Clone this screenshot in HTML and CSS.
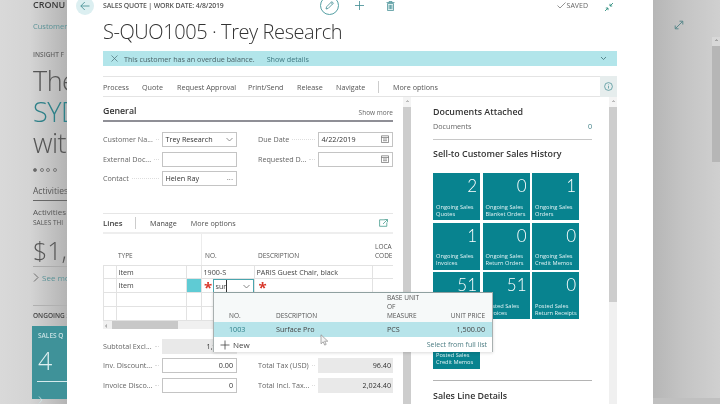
FILE: index.html
```html
<!DOCTYPE html>
<html lang="en">
<head>
<meta charset="utf-8">
<title>Sales Quote</title>
<link rel="stylesheet" href="styles.css">
</head>
<body>
<div class="screen">
  <aside class="backdrop">
    <div class="bg-company">CRONU</div>
    <div class="bg-nav">Customer</div>
    <div class="bg-insight">INSIGHT F</div>
    <div class="bg-hero bg-first">The</div>
    <div class="bg-hero bg-teal">SYD</div>
    <div class="bg-hero">with</div>
    <div class="bg-dots"><i class="on"></i><i></i><i></i><i></i></div>
    <div class="bg-activities">Activities</div>
    <div class="bg-small">Activities</div>
    <div class="bg-sales">SALES THI</div>
    <div class="bg-money">$1,9</div>
    <div class="bg-see"><svg width="6" height="9" viewBox="0 0 6 9"><path d="M1 .5 5 4.5 1 8.500" fill="none" stroke="#555" stroke-width=".8"/></svg>See mo</div>
    <div class="bg-ongoing">ONGOING S</div>
    <div class="bg-tile">
      <div class="bg-tile-title">SALES Q</div>
      <div class="bg-tile-num">4</div>
      <div class="bg-tile-foot"><svg width="5" height="8" viewBox="0 0 5 8"><path d="M1 .5 4 4 1 7.500" fill="none" stroke="#cfe6e8" stroke-width=".8"/></svg></div>
    </div>
  </aside>

  <aside class="backdrop-right">
    <svg class="expand" width="10" height="10" viewBox="0 0 10 10"><path d="M1.500 8.500 8.500 1.500M5.500 1.200H8.800V4.500M1.200 5.500V8.800H4.500" fill="none" stroke="#4f8286" stroke-width=".9"/></svg>
    <div class="bg-scroll"><span class="bg-scroll-arrow">&#8963;</span><div class="bg-scroll-thumb"></div></div>
  </aside>

  <main class="modal">
    <header class="topbar">
      <button class="back"><svg width="10" height="10" viewBox="0 0 10 10"><path d="M9.500 5H.800M4.800 1 .800 5l4 4" fill="none" stroke="#3d8a90" stroke-width=".8"/></svg></button>
      <div class="crumb">SALES QUOTE | WORK DATE: 4/8/2019</div>
      <div class="top-actions">
        <span class="edit"><svg width="11" height="11" viewBox="0 0 11 11"><path d="M2 9 2.600 6.800 7.800 1.600 9.400 3.200 4.200 8.400ZM6.900 2.500 8.500 4.100" fill="none" stroke="#3d8a90" stroke-width=".8"/></svg></span>
        <svg class="plus" width="11" height="11" viewBox="0 0 11 11"><path d="M5.500 1v9M1 5.500h9" stroke="#3d8a90" stroke-width=".8"/></svg>
        <svg class="trash" width="9" height="10" viewBox="0 0 9 10"><path d="M1.500 2.500h6V9.500h-6ZM.5 1.500h8M3 1.500V.5h3v1M3.200 4v4M4.500 4v4M5.800 4v4" fill="#d9eded" stroke="#3d8a90" stroke-width=".7"/></svg>
      </div>
      <div class="saved"><svg width="9" height="7" viewBox="0 0 9 7"><path d="M.5 3.500 3 6 8.500.5" fill="none" stroke="#666" stroke-width=".7"/></svg>SAVED</div>
      <svg class="compress" width="10" height="10" viewBox="0 0 10 10"><path d="M9 1 6 4M6 1.800V4H8.200M1 9l3-3M1.800 6H4V8.200" fill="none" stroke="#2f8f7f" stroke-width=".9"/></svg>
    </header>

    <h1 class="title">S-QUO1005 · Trey Research</h1>

    <div class="banner">
      <svg width="7" height="7" viewBox="0 0 7 7"><path d="M.5.500l6 6M6.500.500l-6 6" stroke="#4a6f75" stroke-width=".7"/></svg>
      <span class="banner-msg">This customer has an overdue balance.</span>
      <span class="banner-link">Show details</span>
      <svg class="banner-chev" width="7" height="5" viewBox="0 0 7 5"><path d="M1 1l2.500 2.500L6 1" fill="none" stroke="#3d6f75" stroke-width=".8"/></svg>
    </div>

    <nav class="actions">
      <span class="act w-process">Process</span>
      <span class="act w-quote">Quote</span>
      <span class="act w-approval">Request Approval</span>
      <span class="act w-print">Print/Send</span>
      <span class="act w-release">Release</span>
      <span class="act w-navigate">Navigate</span>
      <span class="act-divider"></span>
      <span class="act act-more">More options</span>
      <span class="info"><svg width="9" height="9" viewBox="0 0 9 9"><circle cx="4.500" cy="4.500" r="3.900" fill="none" stroke="#3d8a90" stroke-width=".7"/><path d="M4.500 4v2.500M4.500 2.500v.8" stroke="#3d8a90" stroke-width=".7"/></svg></span>
    </nav>

    <div class="panes">
      <section class="pane-left">
        <div class="pane-left-content">
          <div class="general-head"><h2>General</h2><span>Show more</span></div>

          <div class="form-grid general-grid">
            <div class="field"><label>Customer Na...</label><i class="leader"></i><div class="input"><span>Trey Research</span><svg width="7" height="5" viewBox="0 0 7 5"><path d="M.5 1 3.500 4 6.500 1" fill="none" stroke="#666" stroke-width=".7"/></svg></div></div>
            <div class="field"><label>Due Date</label><i class="leader"></i><div class="input"><span>4/22/2019</span><svg width="8" height="8" viewBox="0 0 8 8"><path d="M.5.800h7v6.700h-7ZM.5 2.500h7M2 4h4M2 5.700h4" fill="none" stroke="#555" stroke-width=".6"/></svg></div></div>
            <div class="field"><label>External Doc...</label><i class="leader"></i><div class="input"></div></div>
            <div class="field"><label>Requested D...</label><i class="leader"></i><div class="input"><span></span><svg width="8" height="8" viewBox="0 0 8 8"><path d="M.5.800h7v6.700h-7ZM.5 2.500h7M2 4h4M2 5.700h4" fill="none" stroke="#555" stroke-width=".6"/></svg></div></div>
            <div class="field"><label>Contact</label><i class="leader"></i><div class="input"><span>Helen Ray</span><b class="dots">···</b></div></div>
          </div>

          <div class="lines-bar">
            <strong>Lines</strong><i class="lines-div"></i><span class="lines-manage">Manage</span><span class="lines-more">More options</span>
            <svg class="lines-icon" width="9" height="8" viewBox="0 0 9 8"><path d="M6 .8H.6v6.500h7.200V3.500M4 5 8.300.7M5.800.5h2.700v2.700" fill="none" stroke="#2f8f7f" stroke-width=".7"/></svg>
          </div>

          <div class="lines-table">
            <div class="t-head">
              <span></span><span>TYPE</span><span></span><span class="t-no">NO.</span><span>DESCRIPTION</span><span>LOCA<br>CODE</span>
            </div>
            <div class="t-row"><span></span><span>Item</span><span></span><span>1900-S</span><span>PARIS Guest Chair, black</span><span></span></div>
            <div class="t-row">
              <span></span><span>Item</span><span class="t-current"></span>
              <span class="t-edit"><b class="req">*</b><div class="t-input"><span>sur</span><svg width="7" height="5" viewBox="0 0 7 5"><path d="M.5 1 3.500 4 6.500 1" fill="none" stroke="#555" stroke-width=".7"/></svg></div></span>
              <span><b class="req">*</b></span><span></span>
            </div>
            <div class="t-row"><span></span><span></span><span></span><span></span><span></span><span></span></div>
            <div class="t-row"><span></span><span></span><span></span><span></span><span></span><span></span></div>
            <div class="h-scroll"><span>‹</span><div class="h-thumb"></div></div>
          </div>

          <div class="form-grid totals-grid">
            <div class="field"><label>Subtotal Excl...</label><i class="leader"></i><div class="input readonly"><span class="num">1,928.00</span></div></div>
            <div class="field"></div>
            <div class="field"><label>Inv. Discount...</label><i class="leader"></i><div class="input"><span class="num">0.00</span></div></div>
            <div class="field"><label>Total Tax (USD)</label><i class="leader"></i><div class="input readonly"><span class="num">96.40</span></div></div>
            <div class="field"><label>Invoice Disco...</label><i class="leader"></i><div class="input"><span class="num">0</span></div></div>
            <div class="field"><label>Total Incl. Tax...</label><i class="leader"></i><div class="input readonly"><span class="num">2,024.40</span></div></div>
          </div>

          <div class="dropdown">
            <div class="dd-head">
              <span>NO.</span><span>DESCRIPTION</span><span class="dd-unit">BASE UNIT<br>OF<br>MEASURE</span><span class="dd-price">UNIT PRICE</span>
            </div>
            <div class="dd-row"><span class="dd-code">1003</span><span>Surface Pro</span><span>PCS</span><span class="dd-price">1,500.00</span></div>
            <div class="dd-foot">
              <span class="dd-new"><svg width="10" height="10" viewBox="0 0 10 10"><path d="M5 .5v9M.5 5h9" stroke="#444" stroke-width=".8"/></svg>New</span>
              <span class="dd-full">Select from full list</span>
            </div>
            <svg class="cursor" width="9" height="12" viewBox="0 0 9 12"><path d="M1 .8v9l2.200-2 1.500 3.300 1.500-.7L4.700 7.200H7.800Z" fill="#f4f4f4" stroke="#8a8a8a" stroke-width=".7"/></svg>
          </div>
        </div>
        <div class="scrollbar"><span class="scroll-arrow">&#8963;</span><div class="scroll-thumb"></div></div>
      </section>

      <section class="pane-right">
        <div class="pane-right-content">
          <h3 class="docs-title">Documents Attached</h3>
          <div class="docs-row"><span>Documents</span><span class="docs-num">0</span></div>
          <h3 class="history-title">Sell-to Customer Sales History</h3>
          <div class="tiles">
            <div class="tile"><b>2</b><span>Ongoing Sales<br>Quotes</span></div>
            <div class="tile"><b>0</b><span>Ongoing Sales<br>Blanket Orders</span></div>
            <div class="tile"><b>1</b><span>Ongoing Sales<br>Orders</span></div>
            <div class="tile"><b>1</b><span>Ongoing Sales<br>Invoices</span></div>
            <div class="tile"><b>0</b><span>Ongoing Sales<br>Return Orders</span></div>
            <div class="tile"><b>0</b><span>Ongoing Sales<br>Credit Memos</span></div>
            <div class="tile"><b>51</b><span>Posted Sales<br>Shipments</span></div>
            <div class="tile"><b>51</b><span>Posted Sales<br>Invoices</span></div>
            <div class="tile"><b>0</b><span>Posted Sales<br>Return Receipts</span></div>
            <div class="tile"><b>0</b><span>Posted Sales<br>Credit Memos</span></div>
          </div>
          <h3 class="details-title">Sales Line Details</h3>
        </div>
        <div class="scrollbar right"><span class="scroll-arrow">&#8963;</span><div class="scroll-thumb"></div></div>
      </section>
    </div>
  </main>
</div>
</body>
</html>
```

FILE: styles.css
```css
* { box-sizing: border-box; }
html, body { margin: 0; padding: 0; }
body { width: 720px; height: 404px; overflow: hidden; background: #ccc; font-family: "Open Sans", "Noto Sans", sans-serif; color: #333; }
.screen { position: relative; width: 720px; height: 404px; overflow: hidden; filter: blur(.35px); }
h1, h2, h3 { margin: 0; }

/* dimmed page behind the dialog */
.backdrop { position: absolute; left: 0; top: 0; width: 67px; height: 404px; padding-left: 33px; overflow: hidden; white-space: nowrap; background: linear-gradient(90deg, #d9d9d9 0, #d4d4d4 30px, #b4b4b4 67px); color: #555; }
.bg-company { font-size: 9px; font-weight: 600; line-height: 10px; color: #3a3a3a; }
.bg-nav { font-size: 7.500px; line-height: 10px; margin-top: 11px; color: #5a9296; }
.bg-insight { font-size: 6.500px; line-height: 9px; margin-top: 19px; color: #666; font-weight: 600; }
.bg-hero { font-size: 27px; font-weight: 300; line-height: 31px; letter-spacing: -.5px; }
.bg-first { margin-top: 6px; }
.bg-teal { color: #2e8088; }
.bg-dots { display: flex; gap: 2.500px; margin-top: 10px; }
.bg-dots i { width: 4px; height: 4px; border: .5px solid #777; border-radius: 50%; }
.bg-dots .on { background: #666; }
.bg-activities { margin-top: 12px; font-size: 8.500px; line-height: 13px; padding-bottom: 3px; border-bottom: 1px solid #666; }
.bg-small { margin-top: 5px; font-size: 8px; line-height: 11px; }
.bg-sales { font-size: 6.500px; line-height: 11px; }
.bg-money { margin-top: 6px; font-size: 25px; font-weight: 300; line-height: 32px; padding-bottom: 2px; border-bottom: 1px solid #aaa; height: 33px; }
.bg-see { display: flex; gap: 3px; margin-top: 5px; font-size: 8px; line-height: 11px; color: #5a9296; height: 34px; border-bottom: 1px solid #b0b0b0; align-items: flex-start; }
.bg-see svg { margin-top: 1px; flex: none; }
.bg-ongoing { margin-top: 5px; font-size: 6.500px; font-weight: 600; line-height: 10px; color: #444; }
.bg-tile { margin-top: 5px; height: 73px; margin-left: -1px; padding-left: 6px; background: #3f9299; color: #dff0f1; }
.bg-tile-title { padding-top: 5px; font-size: 6.500px; line-height: 9px; font-weight: 600; color: #c8e2e4; }
.bg-tile-num { font-size: 25px; font-weight: 300; line-height: 27px; margin-top: 7px; }
.bg-tile-foot { margin: 7px 0 0 -1px; padding: 5px 0 0 1px; border-top: 1px solid #d5eaec; }

.backdrop-right { position: absolute; left: 653px; top: 0; width: 67px; height: 404px; padding: 20px 0 0 21px; background: linear-gradient(90deg, #b6b6b6 0, #c4c4c4 30px, #d0d0d0 67px); border-bottom: 6px solid #c0c0c0; }
.expand { display: block; }
.bg-scroll { position: absolute; left: 59px; top: 37px; width: 8px; height: 125px; background: #c6c6c6; }
.bg-scroll-arrow { display: block; height: 9px; font-size: 6px; line-height: 11px; text-align: center; color: #555; background: #d8d8d8; }
.bg-scroll-thumb { height: 116px; background: #b6b6b6; }

/* dialog */
.modal { position: absolute; left: 67px; top: 0; width: 586px; height: 404px; padding: 0 36px; background: #fff; overflow: hidden; }
.topbar { position: relative; display: flex; align-items: center; height: 11px; }
.back { flex: none; display: flex; align-items: center; justify-content: center; width: 18px; height: 18px; margin: 0 9px 0 -27px; padding: 0; border: 0; border-radius: 50%; background: #dceff1; }
.crumb { font-size: 6.900px; line-height: 11px; color: #555; font-weight: 600; white-space: nowrap; letter-spacing: -.02em; }
.top-actions { display: flex; align-items: center; margin-left: 96px; }
.edit { display: flex; align-items: center; justify-content: center; width: 19px; height: 19px; border: .8px solid #55a0a4; border-radius: 50%; }
.plus { margin-left: 15px; }
.trash { margin-left: 21px; }
.saved { display: flex; align-items: center; gap: 1px; margin-left: auto; margin-right: 16px; font-size: 7px; line-height: 11px; color: #666; }
.compress { margin-right: 3px; margin-top: 2px; }
.title { margin-top: 7px; font-size: 20px; font-weight: 300; line-height: 28px; letter-spacing: -.42px; color: #333; white-space: nowrap; }
.banner { display: flex; align-items: center; height: 15px; margin-top: 5px; padding: 0 8px; background: #b2e5ea; font-size: 7.200px; color: #4a6368; }
.banner-msg { margin-left: 6px; white-space: nowrap; }
.banner-link { margin-left: 12px; color: #3f7880; }
.banner-chev { margin-left: auto; margin-right: 2px; }
.actions { display: flex; align-items: center; height: 21px; margin-top: 10px; border-top: 1px solid #e4e4e4; border-bottom: 1px solid #e4e4e4; font-size: 7.200px; color: #555; white-space: nowrap; }
.act { display: block; }
.w-process { width: 39px; } .w-quote { width: 35px; } .w-approval { width: 71px; } .w-print { width: 49px; } .w-release { width: 39px; } .w-navigate { width: 42px; }
.act-divider { width: 1px; height: 12px; background: #ccc; }
.act-more { margin-left: 14px; }
.info { display: flex; align-items: center; justify-content: center; width: 17px; height: 21px; margin-left: auto; background: #e6eded; }

.panes { display: flex; height: 307px; }
.pane-left { position: relative; z-index: 2; display: flex; width: 308px; flex: none; }
.pane-left-content { position: relative; width: 290px; flex: none; }
.scrollbar { width: 8px; margin-left: 10px; flex: none; height: 307px; background: #f0f0f0; }
.scroll-arrow { display: block; height: 10px; font-size: 6px; line-height: 12px; text-align: center; color: #666; background: #f4f4f4; }
.scroll-thumb { height: 297px; background: #cdcdcd; }
.scrollbar.right { margin-left: 13px; }
.scrollbar.right .scroll-thumb { height: 195px; }
.general-head { display: flex; align-items: flex-end; justify-content: space-between; height: 25px; padding-bottom: 2px; border-bottom: 2px solid #8f8f96; }
.general-head h2 { font-size: 8.800px; font-weight: 600; line-height: 13px; color: #333; }
.general-head span { font-size: 6.500px; line-height: 10px; color: #666; }
.form-grid { display: grid; grid-template-columns: 134px 135px; column-gap: 21px; row-gap: 4.500px; grid-auto-rows: 15px; }
.general-grid { margin-top: 10px; }
.totals-grid { margin-top: 10px; }
.field { display: flex; align-items: center; }
.field label { flex: none; max-width: 52px; margin-bottom: 1px; font-size: 7.200px; line-height: 14px; color: #666; white-space: nowrap; }
.leader { flex: 1; min-width: 0; margin: 0 3px; border-bottom: 1px dotted #ddd; }
.input { display: flex; align-items: center; justify-content: space-between; flex: none; width: 75px; height: 15px; padding: 0 3px 1px 2.500px; border: 1px solid #c4c4c4; font-size: 7.200px; color: #333; white-space: nowrap; overflow: hidden; }
.input svg { flex: none; }
.dots { font-size: 8px; font-weight: 400; color: #555; }
.num { margin-left: auto; }
.readonly { padding-right: 1px; background: #e9e9e9; border-color: #e9e9e9; }
.lines-bar { display: flex; align-items: center; height: 21px; margin-top: 26.500px; border-top: 1px solid #e6e6e6; border-bottom: 2px solid #eee; font-size: 7.200px; color: #555; }
.lines-bar strong { font-size: 7.800px; font-weight: 600; color: #444; width: 32px; }
.lines-div { width: 1px; height: 12px; background: #ccc; }
.lines-manage { margin-left: 14px; color: #444; }
.lines-more { margin-left: 14px; }
.lines-icon { margin-left: auto; margin-right: 5px; }
.t-head, .t-row { display: grid; grid-template-columns: 13px 70px 15px 53px 118px 21px; }
.t-head { height: 31px; align-items: end; font-size: 6.500px; line-height: 9px; color: #555; padding-bottom: 5px; }
.t-head span:nth-child(2) { padding-left: 2px; }
.t-head .t-no { align-self: stretch; display: flex; align-items: flex-end; border-left: 1px solid #ececec; padding-left: 3px; margin-bottom: -5px; padding-bottom: 5px; }
.t-head span:nth-child(5) { padding-left: 4px; }
.t-head span:nth-child(6) { padding-left: 3px; }
.t-row { height: 13.750px; border-top: 1px solid #e2e2e2; font-size: 7.200px; line-height: 12px; color: #444; white-space: nowrap; }
.t-row > span { border-left: 1px solid #e2e2e2; padding-left: 1.500px; overflow: hidden; }
.t-row > .t-current { background: #5fcbd4; padding: 0; }
.t-row > .t-edit { display: flex; overflow: visible; padding: 0; }
.req { font-size: 15px; line-height: 17px; font-weight: 700; color: #d8372a; margin-left: 2px; }
.t-row > span .req { display: inline-block; height: 12px; }
.t-input { position: absolute; display: flex; align-items: center; justify-content: space-between; left: 110px; width: 41px; height: 14px; padding: 0 3px 0 1.500px; border: 1px solid #4aa5ae; background: #fff; font-size: 7.200px; line-height: 12px; }
.t-input span { border-right: .7px solid #333; }
.h-scroll { display: flex; height: 9px; background: #f0f0f0; border-top: 1px solid #e2e2e2; font-size: 8px; line-height: 8px; color: #555; }
.h-scroll span { width: 9px; padding-left: 2px; }
.h-thumb { width: 66px; background: #c8c8c8; }

.dropdown { position: absolute; left: 110px; top: 195px; width: 280px; height: 60px; border: 1px solid #a9b0b0; border-top-color: #8fa0a0; background: #f6f9f9; box-shadow: 0 1px 3px rgba(0,0,0,.15); white-space: nowrap; }
.dd-head, .dd-row { display: grid; grid-template-columns: 47px 111px 50px 48px; align-items: end; padding-left: 15px; padding-right: 7px; font-size: 6.500px; line-height: 9px; color: #555; }
.dd-head { height: 29px; padding-bottom: 2px; }
.dd-price { text-align: right; }
.dd-row { align-items: center; height: 15px; background: #b7e4ea; font-size: 7.200px; line-height: 15px; color: #444; }
.dd-code { color: #2c7f88; }
.dd-foot { display: flex; align-items: center; justify-content: space-between; height: 15px; padding: 0 5px 0 6px; background: #fff; font-size: 7px; color: #4e7e84; }
.dd-new { display: flex; align-items: center; gap: 3px; font-size: 8px; color: #444; }
.cursor { position: absolute; left: 106px; top: 41px; }

.pane-right { display: flex; margin-left: 22px; }
.pane-right-content { width: 163px; flex: none; }
.pane-right h3 { font-size: 8.900px; font-weight: 600; line-height: 13px; color: #333; white-space: nowrap; }
.docs-title { margin-top: 8px; }
.docs-row { display: flex; justify-content: space-between; height: 20px; margin-top: 2px; width: 159px; font-size: 7.200px; line-height: 12px; color: #666; border-bottom: 1px solid #c8c8c8; }
.docs-num { color: #3f7f86; }
.history-title { margin-top: 7px; }
.tiles { display: grid; grid-template-columns: repeat(3, 47px); grid-auto-rows: 47px; gap: 2.500px; margin-top: 13px; }
.tile { display: flex; flex-direction: column; justify-content: space-between; padding: 2px 3px 2.500px 3px; background: #08838f; color: #fff; }
.tile b { font-family: "Lato", "Open Sans", sans-serif; font-size: 17px; font-weight: 300; line-height: 22px; text-align: right; }
.tile span { font-size: 5.700px; line-height: 7px; white-space: nowrap; color: #e3f3f5; }
.details-title { margin-top: 11px; padding-top: 8px; width: 159px; border-top: 1px solid #b4b4b4; }
```
